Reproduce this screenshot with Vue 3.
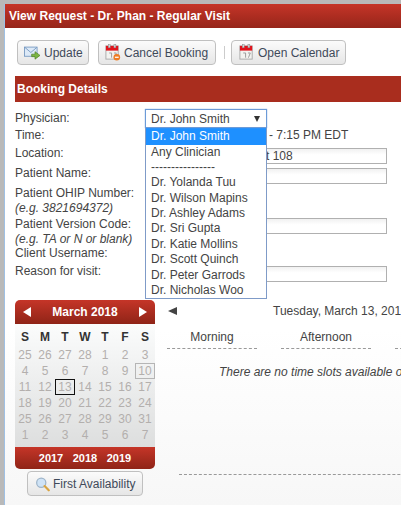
<template>
  <div class="screen">
    <div class="dialog">
      <div class="titlebar">View Request - Dr. Phan - Regular Visit</div>

      <div class="toolbar">
        <button class="btn btn--update">
          <svg width="17" height="15" viewBox="0 0 20 18">
            <rect x="0.5" y="2.5" width="15" height="11" fill="#dce9f7" stroke="#6f93bd" />
            <path d="M1 3l7 6 7-6" fill="none" stroke="#6f93bd" />
            <path d="M9 11h4V8l6 4.5-6 4.5v-3H9z" fill="#7cb542" stroke="#4b7f25" stroke-width="0.8" />
          </svg>
          Update
        </button>
        <button class="btn btn--cancel">
          <svg width="16" height="17" viewBox="0 0 16 18">
            <rect x="0.5" y="2" width="13" height="14" fill="#f3f3f0" stroke="#aaa" />
            <rect x="0.5" y="2" width="13" height="5" fill="#e0141c" />
            <rect x="3" y="0.5" width="2" height="3.5" fill="#ddd" stroke="#888" stroke-width="0.5" />
            <rect x="9" y="0.5" width="2" height="3.5" fill="#ddd" stroke="#888" stroke-width="0.5" />
            <path d="M4 9.5h2.5v5M9 9.5h2.5l-2 5" fill="none" stroke="#999" />
            <circle cx="12" cy="14" r="3.5" fill="#ee7b22" />
            <rect x="10" y="13.4" width="4" height="1.3" fill="#fff" />
          </svg>
          Cancel Booking
        </button>
        <span class="toolbar__sep"></span>
        <button class="btn btn--calendar">
          <svg width="16" height="17" viewBox="0 0 16 18">
            <rect x="0.5" y="2" width="13" height="14" fill="#f3f3f0" stroke="#aaa" />
            <rect x="0.5" y="2" width="13" height="5" fill="#e0141c" />
            <rect x="3" y="0.5" width="2" height="3.5" fill="#ddd" stroke="#888" stroke-width="0.5" />
            <rect x="9" y="0.5" width="2" height="3.5" fill="#ddd" stroke="#888" stroke-width="0.5" />
            <path d="M4 9.5h2.5v5M9 9.5h2.5l-2 5" fill="none" stroke="#999" />
          </svg>
          Open Calendar
        </button>
      </div>

      <div class="section">Booking Details</div>

      <div class="form">
        <div v-for="row in rows" :key="row.label" class="form__row" :style="{ height: row.height + 'px' }">
          <div class="form__label">
            {{ row.label }}
            <em v-if="row.hint">{{ row.hint }}</em>
          </div>
          <div
            v-if="row.input !== undefined"
            class="form__input"
            :style="{ marginTop: row.inputTop + 'px' }"
          >{{ row.input }}</div>
          <div v-else-if="row.value" class="form__value">{{ row.value }}</div>
        </div>

        <!-- open select list lying over the form -->
        <div class="select">
          <div class="select__box">Dr. John Smith <span class="select__caret"></span></div>
          <ul class="select__list">
            <li
              v-for="(opt, i) in physicians"
              :key="opt"
              :class="{ 'is-active': i === 0 }"
            >{{ opt }}</li>
          </ul>
        </div>
      </div>

      <div class="lower">
        <div class="side">
          <div class="cal">
            <div class="cal__head">
              <span class="tri tri--left"></span>
              <span>March 2018</span>
              <span class="tri tri--right"></span>
            </div>
            <div class="cal__body">
              <div v-for="(d, i) in weekDays" :key="i" class="cal__dow">{{ d }}</div>
              <div
                v-for="(d, i) in days"
                :key="'d' + i"
                class="cal__day"
                :class="{ 'is-marked': i === 13, 'is-today': i === 16 }"
              >{{ d }}</div>
            </div>
            <div class="cal__foot">
              <span>2017</span><span>2018</span><span>2019</span>
            </div>
          </div>
          <button class="btn btn--first">
            <svg width="15" height="16" viewBox="0 0 18 18">
              <circle cx="7.5" cy="7.5" r="5.5" fill="#cfe3f6" stroke="#9db4c9" stroke-width="1.5" />
              <path d="M11.5 11.5l5 5" stroke="#d9a441" stroke-width="2.6" stroke-linecap="round" />
            </svg>
            First Availability
          </button>
        </div>

        <div class="slots">
          <div class="slots__date">
            <span class="slots__prev"></span>
            <span>Tuesday, March 13, 2018</span>
          </div>
          <div class="slots__cols">
            <div class="slots__col">Morning</div>
            <div class="slots__col">Afternoon</div>
            <div class="slots__col"></div>
          </div>
          <div class="slots__empty">There are no time slots available on this day</div>
          <div class="slots__line"></div>
        </div>
      </div>
    </div>
  </div>
</template>

<script setup>
const rows = [
  { label: 'Physician:', height: 17 },
  { label: 'Time:', height: 18, value: '- 7:15 PM EDT' },
  { label: 'Location:', height: 20, input: 't 108', inputTop: 3 },
  { label: 'Patient Name:', height: 20, input: '', inputTop: 3 },
  { label: 'Patient OHIP Number:', hint: '(e.g. 3821694372)', height: 31 },
  { label: 'Patient Version Code:', hint: '(e.g. TA or N or blank)', height: 29, input: '', inputTop: 2 },
  { label: 'Client Username:', height: 18 },
  { label: 'Reason for visit:', height: 20, input: '', inputTop: 3 },
]

const physicians = [
  'Dr. John Smith',
  'Any Clinician',
  '----------------',
  'Dr. Yolanda Tuu',
  'Dr. Wilson Mapins',
  'Dr. Ashley Adams',
  'Dr. Sri Gupta',
  'Dr. Katie Mollins',
  'Dr. Scott Quinch',
  'Dr. Peter Garrods',
  'Dr. Nicholas Woo',
]

const weekDays = ['S', 'M', 'T', 'W', 'T', 'F', 'S']

const days = [
  25, 26, 27, 28, 1, 2, 3,
  4, 5, 6, 7, 8, 9, 10,
  11, 12, 13, 14, 15, 16, 17,
  18, 19, 20, 21, 22, 23, 24,
  25, 26, 27, 28, 29, 30, 31,
  1, 2, 3, 4, 5, 6, 7,
]
</script>

<style>
html,
body {
  margin: 0;
  overflow: hidden;
  background: #b9b9b9;
}
</style>

<style scoped>
.screen {
  width: 401px;
  height: 505px;
  overflow: hidden;
  padding: 4px 0 0 4px;
  box-sizing: border-box;
  background: #b9b9b9;
  font-family: "Liberation Sans", Arial, sans-serif;
  font-size: 12px;
  color: #444;
}

.dialog {
  width: 440px;
  height: 501px;
  border-left: 1px solid #9fc0e4;
  background: linear-gradient(#fff 65%, #f7f7f7);
}

.titlebar {
  height: 24px;
  line-height: 24px;
  padding-left: 4px;
  font-weight: bold;
  color: #fff;
  background: linear-gradient(#c53528, #96251a);
}

.toolbar {
  display: flex;
  align-items: center;
  height: 25px;
  padding: 12px 0 0 12px;
}

.btn {
  display: flex;
  align-items: center;
  height: 25px;
  padding: 0;
  box-sizing: border-box;
  border: 1px solid #c0c0c0;
  border-radius: 4px;
  background: linear-gradient(#fbfbfb, #e6e6e6);
  font: inherit;
  color: #3f4a5a;
  white-space: nowrap;
}

.btn--update {
  width: 72px;
  padding-left: 6px;
  gap: 3px;
}

.btn--cancel {
  width: 118px;
  margin-left: 9px;
  padding-left: 6px;
  gap: 3px;
}

.btn--calendar {
  width: 115px;
  padding-left: 7px;
  gap: 3px;
}

.toolbar__sep {
  width: 1px;
  height: 13px;
  margin: 0 6px 0 8px;
  background: #ccc;
}

.section {
  height: 26px;
  line-height: 26px;
  margin: 11px 0 0 10px;
  padding-left: 2px;
  font-weight: bold;
  color: #fff;
  background: #a92d1e;
}

.form {
  position: relative;
  padding: 8px 0 0 10px;
}

.form__row {
  display: flex;
  align-items: flex-start;
}

.form__label {
  width: 130px;
  flex: none;
  line-height: 15px;
  padding-top: 1px;
  color: #444;
}

.form__label em {
  display: block;
}

.form__input {
  width: 242px;
  height: 16px;
  line-height: 15px;
  padding-left: 4px;
  box-sizing: border-box;
  border: 1px solid #b0b0b0;
  background: linear-gradient(#f1f1f1, #fff 40%);
  text-indent: 116px;
  white-space: nowrap;
}

.form__value {
  padding: 1px 0 0 124px;
  line-height: 15px;
}

.select {
  position: absolute;
  top: 7px;
  left: 140px;
  width: 122px;
}

.select__box {
  position: relative;
  height: 19px;
  line-height: 18px;
  box-sizing: border-box;
  padding-left: 5px;
  border: 1px solid #6c9bd8;
  box-shadow: 0 0 1px #6c9bd8;
  background: #fff;
}

.select__caret {
  position: absolute;
  top: 6px;
  right: 6px;
  border-style: solid;
  border-width: 6px 3.5px 0;
  border-color: #333 transparent transparent;
}

.select__list {
  list-style: none;
  margin: 0;
  padding: 0;
  border: 1px solid #7f9bc8;
  border-top: 0;
  background: #fff;
}

.select__list li {
  height: 15.4px;
  line-height: 15.4px;
  padding-left: 5px;
}

.select__list li.is-active {
  height: 16.5px;
  line-height: 17.5px;
  background: #1e90ff;
  color: #fff;
}

.lower {
  display: flex;
  margin-top: 17px;
}

.side {
  width: 140px;
  margin-left: 10px;
  flex: none;
}

.cal {
  width: 140px;
  height: 169px;
  border-radius: 5px;
  overflow: hidden;
}

.cal__head {
  display: flex;
  align-items: center;
  justify-content: space-between;
  height: 24px;
  padding: 0 8px;
  font-weight: bold;
  color: #fff;
  background: linear-gradient(#c53528, #8f2417);
}

.tri {
  border-style: solid;
  border-color: transparent;
}

.tri--left {
  border-width: 5px 8px 5px 0;
  border-right-color: #fff;
}

.tri--right {
  border-width: 5px 0 5px 8px;
  border-left-color: #fff;
}

.cal__body {
  display: grid;
  grid-template-columns: repeat(7, 20px);
  grid-template-rows: 18px repeat(6, 16px);
  height: 123px;
  padding-top: 5px;
  box-sizing: border-box;
  background: linear-gradient(#fbfcfc, #dddede);
}

.cal__dow {
  text-align: center;
  line-height: 16px;
  font-weight: bold;
  color: #333;
}

.cal__day {
  text-align: center;
  line-height: 16px;
  color: #b3afad;
  box-sizing: border-box;
}

.cal__day.is-marked {
  border: 1px solid #b5b5b5;
  line-height: 14px;
}

.cal__day.is-today {
  border: 1px solid #111;
  line-height: 14px;
}

.cal__foot {
  display: flex;
  justify-content: center;
  gap: 9.5px;
  height: 22px;
  line-height: 22px;
  font-size: 11px;
  font-weight: bold;
  color: #fff;
  background: linear-gradient(#c53528, #8f2417);
}

.btn--first {
  width: 116px;
  margin: 2px 0 0 12px;
  padding-left: 7px;
  gap: 3px;
}

.slots {
  flex: 1;
  min-width: 0;
  padding-left: 12px;
}

.slots__date {
  display: flex;
  align-items: center;
  height: 22px;
  white-space: nowrap;
}

.slots__prev {
  width: 0;
  height: 0;
  margin: 0 96px 0 1px;
  border-style: solid;
  border-width: 4px 9px 4px 0;
  border-color: transparent #444 transparent transparent;
}

.slots__cols {
  display: grid;
  grid-template-columns: repeat(3, 90px);
  column-gap: 24px;
  margin-top: 5px;
}

.slots__col {
  height: 22px;
  line-height: 20px;
  text-align: center;
  border-bottom: 1px dashed #999;
  box-sizing: border-box;
  color: #444;
}

.slots__empty {
  margin: 16px 0 0 52px;
  font-style: italic;
  white-space: nowrap;
}

.slots__line {
  margin: 95px 0 0 12px;
  border-top: 1px dashed #999;
}
</style>
